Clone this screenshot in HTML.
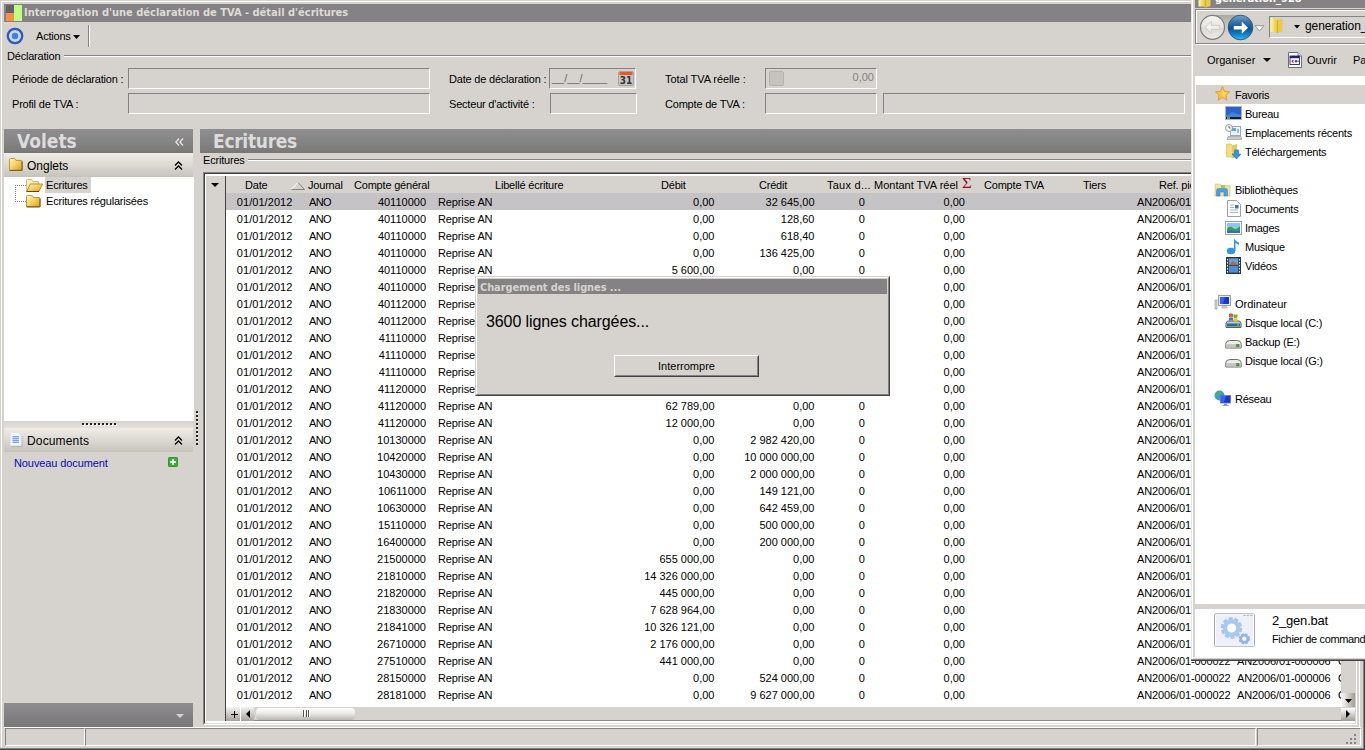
<!DOCTYPE html>
<html lang="fr"><head><meta charset="utf-8"><title>Interrogation d'une déclaration de TVA - détail d'écritures</title>
<style>
html,body{margin:0;padding:0}
body{width:1365px;height:750px;overflow:hidden;position:relative;background:#d6d3ce;font:11px "Liberation Sans",sans-serif;color:#000}
div,span,svg{position:absolute;box-sizing:border-box;white-space:nowrap}
.t{letter-spacing:-0.2px;height:14px;line-height:14px}
.b{font-family:"DejaVu Sans Condensed","DejaVu Sans","Liberation Sans",sans-serif;font-weight:bold}
.fld{border:1px solid;border-color:#848284 #fff #fff #848284;background:#d6d3ce}
.hdr{background:linear-gradient(#8f8d8f,#868586 50%,#777876);}
.sub{background:linear-gradient(#f0ede7,#dad7d1 55%,#c6c3bd)}
.hl{left:0;height:1px;background:#848284;border-bottom:1px solid #fff;box-sizing:content-box}
/* grid rows */
.r{left:226px;width:1115px;height:17px;line-height:17px;overflow:hidden}
.r.sel{background:#c6c3c6}
.r span{top:1px;height:17px}
.c1{left:10.8px;letter-spacing:.06px}.c2{left:83px;letter-spacing:-.7px}.c3{right:915px}.c4{left:212px;letter-spacing:-.12px}.c5{right:626.5px}.c6{right:526.5px}.c7{left:632.7px}.c8{right:376px}.c9{left:911px;letter-spacing:-.12px}.c10{left:1011px;letter-spacing:-.12px}.c11{left:1112px}
.gh{top:178px;height:14px;line-height:14px;letter-spacing:-0.2px}
.xi{left:1245px;height:14px;line-height:14px;letter-spacing:-0.25px}
.xg{left:1235px;height:14px;line-height:14px;letter-spacing:-0.25px}
</style></head>
<body>
<svg style="left:0;top:0" width="0" height="0"><defs>
<linearGradient id="fg" x1="0" y1="0" x2="1" y2="1"><stop offset="0" stop-color="#fdf3c4"/><stop offset=".45" stop-color="#f6d466"/><stop offset="1" stop-color="#dc9a1c"/></linearGradient>
<linearGradient id="fb" x1="0" y1="0" x2="1" y2="1"><stop offset="0" stop-color="#fdf6d8"/><stop offset="1" stop-color="#f0d88a"/></linearGradient>
</defs></svg>
<!-- window frame -->
<div style="left:1px;top:1px;width:1362px;height:1px;background:#fff"></div>
<div style="left:1px;top:1px;width:1px;height:746px;background:#fff"></div>
<div style="left:0;top:748px;width:1365px;height:1px;background:#848284"></div>
<div style="left:0;top:749px;width:1365px;height:1px;background:#424142"></div>
<div style="left:1363px;top:0;width:1px;height:749px;background:#848284"></div>
<div style="left:1364px;top:0;width:1px;height:750px;background:#424142"></div>

<!-- title bar -->
<div id="titlebar" style="left:4px;top:4px;width:1356px;height:18px;background:#848284">
  <div style="left:2px;top:1px;width:8px;height:8px;background:#636163"></div>
  <div style="left:2px;top:9px;width:8px;height:8px;background:#ff8e42"></div>
  <div style="left:10px;top:1px;width:8px;height:16px;background:#bdff84"></div>
  <span class="b" style="left:20px;top:0;height:18px;line-height:18px;font-size:11px;color:#dedbd6">Interrogation d'une déclaration de TVA - détail d'écritures</span>
</div>

<!-- toolbar -->
<svg style="left:6px;top:27px" width="18" height="18" viewBox="0 0 18 18"><circle cx="9" cy="9" r="7.2" fill="#cdd6e4" stroke="#3058bc" stroke-width="2.300"/><circle cx="9" cy="9" r="3.2" fill="#3b80e6"/></svg>
<span class="t" style="left:36px;top:29px">Actions</span>
<svg style="left:73px;top:35px" width="8" height="4" viewBox="0 0 8 4"><path d="M0 0h7L3.5 4z" fill="#000"/></svg>
<div style="left:88px;top:25px;width:1px;height:22px;background:#848284"></div>
<div style="left:89px;top:25px;width:1px;height:22px;background:#fff"></div>

<!-- Déclaration group -->
<span class="t" style="left:7px;top:49px">Déclaration</span>
<div class="hl" style="left:64px;top:55px;width:1296px"></div>
<span class="t" style="left:12px;top:72px">Période de déclaration :</span>
<div class="fld" style="left:128px;top:68px;width:302px;height:21px"></div>
<span class="t" style="left:12px;top:97px">Profil de TVA :</span>
<div class="fld" style="left:128px;top:93px;width:302px;height:21px"></div>
<span class="t" style="left:449px;top:72px">Date de déclaration :</span>
<div class="fld" style="left:549px;top:68px;width:87px;height:21px">
  <span style="left:2px;top:2px;height:14px;line-height:14px;color:#6a6a6a;letter-spacing:0">__/__/____</span>
  <svg style="left:68px;top:2px" width="16" height="15" viewBox="0 0 16 15"><rect x="0.5" y="0.5" width="15" height="14" rx="1.5" fill="#c8c6c2" stroke="#a6a39c"/><rect x="1.5" y="1" width="13" height="3" fill="#e25a2c"/><text x="8" y="12.5" font-family="DejaVu Sans Condensed,DejaVu Sans,sans-serif" font-weight="bold" font-size="10" text-anchor="middle" fill="#333">31</text></svg>
</div>
<span class="t" style="left:449px;top:97px">Secteur d'activité :</span>
<div class="fld" style="left:550px;top:93px;width:87px;height:21px"></div>
<span class="t" style="left:665px;top:72px;letter-spacing:-.08px">Total TVA réelle :</span>
<div class="fld" style="left:765px;top:68px;width:112px;height:21px">
  <div style="left:3px;top:2px;width:15px;height:15px;border:1px solid #b5b2ab;border-radius:2px;background:#c6c3be"></div>
  <span style="right:2px;top:1px;height:14px;line-height:14px;color:#848284">0,00</span>
</div>
<span class="t" style="left:665px;top:97px">Compte de TVA :</span>
<div class="fld" style="left:765px;top:93px;width:112px;height:21px"></div>
<div class="fld" style="left:883px;top:93px;width:302px;height:21px"></div>

<!-- Volets panel -->
<div class="hdr" style="left:4px;top:129px;width:189px;height:24px">
  <span class="b" style="left:13px;top:0;height:24px;line-height:25px;font-size:19px;color:#dcdcdc">Volets</span>
  <svg style="left:171px;top:9px" width="9" height="8" viewBox="0 0 9 8"><path d="M4 .5L.8 4L4 7.500M8 .5L4.800 4L8 7.500" fill="none" stroke="#ecebe8" stroke-width="1.150"/></svg>
</div>
<div class="sub" style="left:4px;top:153px;width:189px;height:24px">
  <svg style="left:5px;top:5px" width="14" height="13.500" viewBox="0 0 15 14" preserveAspectRatio="none"><path d="M.5 1.500q0-1 1-1h4q1 0 1.500 1l.5 1h5.500q1 0 1 1v8.500q0 1-1 1h-11.500q-1 0-1-1z" fill="url(#fg)" stroke="#b48a2c" stroke-width=".9"/><path d="M.5 12.800h13.500M14 3.500v9.500" stroke="#6e5418" stroke-width="1" fill="none"/></svg>
  <span style="left:23px;top:6px;height:14px;line-height:14px;font-size:12px">Onglets</span>
  <svg style="left:170px;top:8px" width="9" height="10" viewBox="0 0 9 10"><path d="M1 4.500L4.500 1L8 4.500M1 8.500L4.500 5L8 8.500" fill="none" stroke="#000" stroke-width="1.300"/></svg>
</div>
<div style="left:4px;top:177px;width:190px;height:244px;background:#fff">
  <div style="left:11px;top:8px;width:1px;height:17px;border-left:1px dotted #848284"></div>
  <div style="left:11px;top:8px;width:11px;height:1px;border-top:1px dotted #848284"></div>
  <div style="left:11px;top:24px;width:11px;height:1px;border-top:1px dotted #848284"></div>
  <svg style="left:22px;top:2px" width="17" height="13" viewBox="0 0 17 13"><path d="M.5 1.500q0-1 1-1h3.500q1 0 1.500 1l.5 1h4.500q1 0 1 1v2h-8l-3 6.500h-1.500z" fill="url(#fb)" stroke="#c8a040" stroke-width=".8"/><path d="M4.200 5h12.300l-3.500 7.500h-12.300z" fill="url(#fg)" stroke="#a87c20" stroke-width=".8"/><path d="M.7 12.500h12.300" stroke="#5e4812" stroke-width="1"/></svg>
  <div style="left:41px;top:0;width:46px;height:16px;background:#d6d3ce"></div>
  <span class="t" style="left:42px;top:1px">Ecritures</span>
  <svg style="left:22px;top:18px" width="15" height="13" viewBox="0 0 15 13"><path d="M.5 1.500q0-1 1-1h4q1 0 1.500 1l.5 1h5.500q1 0 1 1v7.500q0 1-1 1h-11.500q-1 0-1-1z" fill="url(#fg)" stroke="#b48a2c" stroke-width=".9"/><path d="M.5 11.800h13.500M14 3.500v8.500" stroke="#6e5418" stroke-width="1" fill="none"/></svg>
  <span class="t" style="left:42px;top:17px">Ecritures régularisées</span>
</div>
<div style="left:4px;top:421px;width:189px;height:7px;background:linear-gradient(#d6d3ce,#e4e2dc)">
  <div style="left:79px;top:3px;width:35px;height:2px;background:repeating-linear-gradient(90deg,#fff 0 2px,transparent 2px 4px)"></div>
  <div style="left:78px;top:2px;width:35px;height:2px;background:repeating-linear-gradient(90deg,#222 0 2px,transparent 2px 4px)"></div>
</div>
<div class="sub" style="left:4px;top:428px;width:189px;height:24px">
  <svg style="left:6px;top:4px" width="13" height="15" viewBox="0 0 13 15"><path d="M1.500 14.500h10.500v-10.500" stroke="#b4b2ae" fill="none"/><path d="M.5 .5h7.500l3 3v10h-10.500z" fill="#f4f7ff" stroke="#dfe6f6"/><path d="M2.500 4.500h6.500M2.500 6.500h6.500M2.500 8.500h6.500M2.500 10.500h6.500" stroke="#7f9fe6" stroke-width="1"/><path d="M2.500 5.500h6.500M2.500 7.500h6.500M2.500 9.500h6.500" stroke="#c4d2f4" stroke-width="1"/></svg>
  <span style="left:23px;top:6px;height:14px;line-height:14px;font-size:12px;letter-spacing:.15px">Documents</span>
  <svg style="left:170px;top:8px" width="9" height="10" viewBox="0 0 9 10"><path d="M1 4.500L4.500 1L8 4.500M1 8.500L4.500 5L8 8.500" fill="none" stroke="#000" stroke-width="1.300"/></svg>
</div>
<span class="t" style="left:14px;top:456px;color:#0808b4;letter-spacing:-0.1px">Nouveau document</span>
<svg style="left:168px;top:457px" width="10" height="10" viewBox="0 0 11 11"><rect x=".5" y=".5" width="10" height="10" rx="1" fill="#3cae3c" stroke="#2a8a2a"/><path d="M5.500 2.500v6M2.500 5.500h6" stroke="#fff" stroke-width="2"/></svg>
<div style="left:4px;top:703px;width:189px;height:24px;background:linear-gradient(#8f8d8f,#868486 40%,#767876)">
  <svg style="left:172px;top:11px" width="8" height="4" viewBox="0 0 8 4"><path d="M0 0h8L4 4z" fill="#d6d3ce"/></svg>
</div>
<!-- vertical splitter dots -->
<div style="left:197px;top:412px;width:1px;height:35px;background:repeating-linear-gradient(#fff 0 2px,transparent 2px 4px)"></div>
<div style="left:196px;top:411px;width:1.500px;height:35px;background:repeating-linear-gradient(#222 0 2px,transparent 2px 4px)"></div>

<!-- Ecritures panel -->
<div class="hdr" style="left:200px;top:129px;width:1160px;height:24px">
  <span class="b" style="left:13px;top:0;height:24px;line-height:25px;font-size:19px;letter-spacing:-.3px;color:#dcdcdc">Ecritures</span>
</div>
<span class="t" style="left:203px;top:153px">Ecritures</span>
<div class="hl" style="left:248px;top:159px;width:1110px"></div>

<!-- grid frame -->
<div style="left:203px;top:172px;width:1154px;height:553px;border:1px solid;border-color:#848284 #fff #fff #848284"></div>
<div style="left:1359px;top:129px;width:1px;height:598px;background:#fff"></div>
<div style="left:204px;top:173px;width:1152px;height:551px;border:1px solid;border-color:#424142 #d6d3ce #e0deda #424142;background:#fff"></div>
<!-- selector column + header -->
<div style="left:206px;top:176px;width:20px;height:545px;background:#d6d3ce;border-right:1px solid #424142"></div>
<div style="left:226px;top:176px;width:1129px;height:17px;background:#d6d3ce"></div>
<svg style="left:211px;top:183px" width="8" height="4" viewBox="0 0 8 4"><path d="M0 0h8L4 4z" fill="#000"/></svg>
<span class="gh" style="left:245px">Date</span>
<svg style="left:291px;top:182px" width="14" height="8" viewBox="0 0 14 8"><path d="M.5 7L7 .5" stroke="#fff" fill="none"/><path d="M7 .5L13.500 7.500H.5" stroke="#848284" fill="none"/></svg>
<span class="gh" style="left:308px">Journal</span>
<span class="gh" style="left:354px">Compte général</span>
<span class="gh" style="left:495px">Libellé écriture</span>
<span class="gh" style="left:661px">Débit</span>
<span class="gh" style="left:759px">Crédit</span>
<span class="gh" style="left:827px;letter-spacing:.25px">Taux d...</span>
<span class="gh" style="left:874px;letter-spacing:0">Montant TVA réel</span>
<span class="gh" style="left:962px;color:#a00018;font-family:'Liberation Serif',serif;font-size:14px;top:177px;letter-spacing:0;transform:scaleX(1.2);transform-origin:0 0">Σ</span>
<span class="gh" style="left:984px">Compte TVA</span>
<span class="gh" style="left:1083px">Tiers</span>
<span class="gh" style="left:1159px">Ref. pièce</span>
<span class="gh" style="left:1259px">Ref. origine</span>

<div id="rows">
<div class="r sel" style="top:193px"><span class="c1">01/01/2012</span><span class="c2">ANO</span><span class="c3">40110000</span><span class="c4">Reprise AN</span><span class="c5">0,00</span><span class="c6">32 645,00</span><span class="c7">0</span><span class="c8">0,00</span><span class="c9">AN2006/01-000022</span><span class="c10">AN2006/01-000006</span><span class="c11">OD</span></div>
<div class="r" style="top:210px"><span class="c1">01/01/2012</span><span class="c2">ANO</span><span class="c3">40110000</span><span class="c4">Reprise AN</span><span class="c5">0,00</span><span class="c6">128,60</span><span class="c7">0</span><span class="c8">0,00</span><span class="c9">AN2006/01-000022</span><span class="c10">AN2006/01-000006</span><span class="c11">OD</span></div>
<div class="r" style="top:227px"><span class="c1">01/01/2012</span><span class="c2">ANO</span><span class="c3">40110000</span><span class="c4">Reprise AN</span><span class="c5">0,00</span><span class="c6">618,40</span><span class="c7">0</span><span class="c8">0,00</span><span class="c9">AN2006/01-000022</span><span class="c10">AN2006/01-000006</span><span class="c11">OD</span></div>
<div class="r" style="top:244px"><span class="c1">01/01/2012</span><span class="c2">ANO</span><span class="c3">40110000</span><span class="c4">Reprise AN</span><span class="c5">0,00</span><span class="c6">136 425,00</span><span class="c7">0</span><span class="c8">0,00</span><span class="c9">AN2006/01-000022</span><span class="c10">AN2006/01-000006</span><span class="c11">OD</span></div>
<div class="r" style="top:261px"><span class="c1">01/01/2012</span><span class="c2">ANO</span><span class="c3">40110000</span><span class="c4">Reprise AN</span><span class="c5">5 600,00</span><span class="c6">0,00</span><span class="c7">0</span><span class="c8">0,00</span><span class="c9">AN2006/01-000022</span><span class="c10">AN2006/01-000006</span><span class="c11">OD</span></div>
<div class="r" style="top:278px"><span class="c1">01/01/2012</span><span class="c2">ANO</span><span class="c3">40110000</span><span class="c4">Reprise AN</span><span class="c5">0,00</span><span class="c6">8 452,00</span><span class="c7">0</span><span class="c8">0,00</span><span class="c9">AN2006/01-000022</span><span class="c10">AN2006/01-000006</span><span class="c11">OD</span></div>
<div class="r" style="top:295px"><span class="c1">01/01/2012</span><span class="c2">ANO</span><span class="c3">40112000</span><span class="c4">Reprise AN</span><span class="c5">0,00</span><span class="c6">12 640,00</span><span class="c7">0</span><span class="c8">0,00</span><span class="c9">AN2006/01-000022</span><span class="c10">AN2006/01-000006</span><span class="c11">OD</span></div>
<div class="r" style="top:312px"><span class="c1">01/01/2012</span><span class="c2">ANO</span><span class="c3">40112000</span><span class="c4">Reprise AN</span><span class="c5">0,00</span><span class="c6">3 215,00</span><span class="c7">0</span><span class="c8">0,00</span><span class="c9">AN2006/01-000022</span><span class="c10">AN2006/01-000006</span><span class="c11">OD</span></div>
<div class="r" style="top:329px"><span class="c1">01/01/2012</span><span class="c2">ANO</span><span class="c3">41110000</span><span class="c4">Reprise AN</span><span class="c5">45 210,00</span><span class="c6">0,00</span><span class="c7">0</span><span class="c8">0,00</span><span class="c9">AN2006/01-000022</span><span class="c10">AN2006/01-000006</span><span class="c11">OD</span></div>
<div class="r" style="top:346px"><span class="c1">01/01/2012</span><span class="c2">ANO</span><span class="c3">41110000</span><span class="c4">Reprise AN</span><span class="c5">1 250,00</span><span class="c6">0,00</span><span class="c7">0</span><span class="c8">0,00</span><span class="c9">AN2006/01-000022</span><span class="c10">AN2006/01-000006</span><span class="c11">OD</span></div>
<div class="r" style="top:363px"><span class="c1">01/01/2012</span><span class="c2">ANO</span><span class="c3">41110000</span><span class="c4">Reprise AN</span><span class="c5">8 640,00</span><span class="c6">0,00</span><span class="c7">0</span><span class="c8">0,00</span><span class="c9">AN2006/01-000022</span><span class="c10">AN2006/01-000006</span><span class="c11">OD</span></div>
<div class="r" style="top:380px"><span class="c1">01/01/2012</span><span class="c2">ANO</span><span class="c3">41120000</span><span class="c4">Reprise AN</span><span class="c5">23 410,00</span><span class="c6">0,00</span><span class="c7">0</span><span class="c8">0,00</span><span class="c9">AN2006/01-000022</span><span class="c10">AN2006/01-000006</span><span class="c11">OD</span></div>
<div class="r" style="top:397px"><span class="c1">01/01/2012</span><span class="c2">ANO</span><span class="c3">41120000</span><span class="c4">Reprise AN</span><span class="c5">62 789,00</span><span class="c6">0,00</span><span class="c7">0</span><span class="c8">0,00</span><span class="c9">AN2006/01-000022</span><span class="c10">AN2006/01-000006</span><span class="c11">OD</span></div>
<div class="r" style="top:414px"><span class="c1">01/01/2012</span><span class="c2">ANO</span><span class="c3">41120000</span><span class="c4">Reprise AN</span><span class="c5">12 000,00</span><span class="c6">0,00</span><span class="c7">0</span><span class="c8">0,00</span><span class="c9">AN2006/01-000022</span><span class="c10">AN2006/01-000006</span><span class="c11">OD</span></div>
<div class="r" style="top:431px"><span class="c1">01/01/2012</span><span class="c2">ANO</span><span class="c3">10130000</span><span class="c4">Reprise AN</span><span class="c5">0,00</span><span class="c6">2 982 420,00</span><span class="c7">0</span><span class="c8">0,00</span><span class="c9">AN2006/01-000022</span><span class="c10">AN2006/01-000006</span><span class="c11">OD</span></div>
<div class="r" style="top:448px"><span class="c1">01/01/2012</span><span class="c2">ANO</span><span class="c3">10420000</span><span class="c4">Reprise AN</span><span class="c5">0,00</span><span class="c6">10 000 000,00</span><span class="c7">0</span><span class="c8">0,00</span><span class="c9">AN2006/01-000022</span><span class="c10">AN2006/01-000006</span><span class="c11">OD</span></div>
<div class="r" style="top:465px"><span class="c1">01/01/2012</span><span class="c2">ANO</span><span class="c3">10430000</span><span class="c4">Reprise AN</span><span class="c5">0,00</span><span class="c6">2 000 000,00</span><span class="c7">0</span><span class="c8">0,00</span><span class="c9">AN2006/01-000022</span><span class="c10">AN2006/01-000006</span><span class="c11">OD</span></div>
<div class="r" style="top:482px"><span class="c1">01/01/2012</span><span class="c2">ANO</span><span class="c3">10611000</span><span class="c4">Reprise AN</span><span class="c5">0,00</span><span class="c6">149 121,00</span><span class="c7">0</span><span class="c8">0,00</span><span class="c9">AN2006/01-000022</span><span class="c10">AN2006/01-000006</span><span class="c11">OD</span></div>
<div class="r" style="top:499px"><span class="c1">01/01/2012</span><span class="c2">ANO</span><span class="c3">10630000</span><span class="c4">Reprise AN</span><span class="c5">0,00</span><span class="c6">642 459,00</span><span class="c7">0</span><span class="c8">0,00</span><span class="c9">AN2006/01-000022</span><span class="c10">AN2006/01-000006</span><span class="c11">OD</span></div>
<div class="r" style="top:516px"><span class="c1">01/01/2012</span><span class="c2">ANO</span><span class="c3">15110000</span><span class="c4">Reprise AN</span><span class="c5">0,00</span><span class="c6">500 000,00</span><span class="c7">0</span><span class="c8">0,00</span><span class="c9">AN2006/01-000022</span><span class="c10">AN2006/01-000006</span><span class="c11">OD</span></div>
<div class="r" style="top:533px"><span class="c1">01/01/2012</span><span class="c2">ANO</span><span class="c3">16400000</span><span class="c4">Reprise AN</span><span class="c5">0,00</span><span class="c6">200 000,00</span><span class="c7">0</span><span class="c8">0,00</span><span class="c9">AN2006/01-000022</span><span class="c10">AN2006/01-000006</span><span class="c11">OD</span></div>
<div class="r" style="top:550px"><span class="c1">01/01/2012</span><span class="c2">ANO</span><span class="c3">21500000</span><span class="c4">Reprise AN</span><span class="c5">655 000,00</span><span class="c6">0,00</span><span class="c7">0</span><span class="c8">0,00</span><span class="c9">AN2006/01-000022</span><span class="c10">AN2006/01-000006</span><span class="c11">OD</span></div>
<div class="r" style="top:567px"><span class="c1">01/01/2012</span><span class="c2">ANO</span><span class="c3">21810000</span><span class="c4">Reprise AN</span><span class="c5">14 326 000,00</span><span class="c6">0,00</span><span class="c7">0</span><span class="c8">0,00</span><span class="c9">AN2006/01-000022</span><span class="c10">AN2006/01-000006</span><span class="c11">OD</span></div>
<div class="r" style="top:584px"><span class="c1">01/01/2012</span><span class="c2">ANO</span><span class="c3">21820000</span><span class="c4">Reprise AN</span><span class="c5">445 000,00</span><span class="c6">0,00</span><span class="c7">0</span><span class="c8">0,00</span><span class="c9">AN2006/01-000022</span><span class="c10">AN2006/01-000006</span><span class="c11">OD</span></div>
<div class="r" style="top:601px"><span class="c1">01/01/2012</span><span class="c2">ANO</span><span class="c3">21830000</span><span class="c4">Reprise AN</span><span class="c5">7 628 964,00</span><span class="c6">0,00</span><span class="c7">0</span><span class="c8">0,00</span><span class="c9">AN2006/01-000022</span><span class="c10">AN2006/01-000006</span><span class="c11">OD</span></div>
<div class="r" style="top:618px"><span class="c1">01/01/2012</span><span class="c2">ANO</span><span class="c3">21841000</span><span class="c4">Reprise AN</span><span class="c5">10 326 121,00</span><span class="c6">0,00</span><span class="c7">0</span><span class="c8">0,00</span><span class="c9">AN2006/01-000022</span><span class="c10">AN2006/01-000006</span><span class="c11">OD</span></div>
<div class="r" style="top:635px"><span class="c1">01/01/2012</span><span class="c2">ANO</span><span class="c3">26710000</span><span class="c4">Reprise AN</span><span class="c5">2 176 000,00</span><span class="c6">0,00</span><span class="c7">0</span><span class="c8">0,00</span><span class="c9">AN2006/01-000022</span><span class="c10">AN2006/01-000006</span><span class="c11">OD</span></div>
<div class="r" style="top:652px"><span class="c1">01/01/2012</span><span class="c2">ANO</span><span class="c3">27510000</span><span class="c4">Reprise AN</span><span class="c5">441 000,00</span><span class="c6">0,00</span><span class="c7">0</span><span class="c8">0,00</span><span class="c9">AN2006/01-000022</span><span class="c10">AN2006/01-000006</span><span class="c11">OD</span></div>
<div class="r" style="top:669px"><span class="c1">01/01/2012</span><span class="c2">ANO</span><span class="c3">28150000</span><span class="c4">Reprise AN</span><span class="c5">0,00</span><span class="c6">524 000,00</span><span class="c7">0</span><span class="c8">0,00</span><span class="c9">AN2006/01-000022</span><span class="c10">AN2006/01-000006</span><span class="c11">OD</span></div>
<div class="r" style="top:686px"><span class="c1">01/01/2012</span><span class="c2">ANO</span><span class="c3">28181000</span><span class="c4">Reprise AN</span><span class="c5">0,00</span><span class="c6">9 627 000,00</span><span class="c7">0</span><span class="c8">0,00</span><span class="c9">AN2006/01-000022</span><span class="c10">AN2006/01-000006</span><span class="c11">OD</span></div>
</div>
<!-- vertical scrollbar -->
<div style="left:1341px;top:193px;width:14px;height:514px;background:#d6d3ce"></div>
<div style="left:1341px;top:693px;width:14px;height:14px;background:linear-gradient(90deg,#fff,#d6d3ce 45%,#a09c94)"></div>
<svg style="left:1345px;top:699px" width="7" height="4" viewBox="0 0 7 4"><path d="M0 0h7L3.500 4z" fill="#000"/></svg>
<!-- horizontal scrollbar -->
<div style="left:226px;top:707px;width:1129px;height:14px;background:#d6d3ce;border-bottom:1px solid #8c8a86"></div>
<div style="left:226px;top:707px;width:14px;height:14px;background:linear-gradient(#f4f3f0,#d6d3ce 40%,#a6a39d)"></div>
<svg style="left:231px;top:711px" width="7" height="7" viewBox="0 0 7 7" shape-rendering="crispEdges"><path d="M3.500 0v7M0 3.500h7" stroke="#000" stroke-width="1"/></svg>
<div style="left:240px;top:707px;width:1px;height:14px;background:#fff"></div>
<div style="left:241px;top:707px;width:13px;height:14px;background:linear-gradient(#f4f3f0,#d6d3ce 40%,#a6a39d)"></div>
<svg style="left:246px;top:710px" width="4" height="8" viewBox="0 0 4 8"><path d="M4 0v8L0 4z" fill="#000"/></svg>
<div style="left:256px;top:708px;width:99px;height:12px;border-radius:4px;background:linear-gradient(#fff,#eceae6 45%,#bab7b1)"></div>
<div style="left:303px;top:710px;width:1px;height:7px;background:#555"></div>
<div style="left:306px;top:710px;width:1px;height:7px;background:#555"></div>
<div style="left:308px;top:710px;width:1px;height:7px;background:#555"></div>
<div style="left:304px;top:710px;width:1px;height:7px;background:#fff"></div>
<div style="left:307px;top:710px;width:1px;height:7px;background:#fff"></div>
<div style="left:309px;top:710px;width:1px;height:7px;background:#fff"></div>
<div style="left:1341px;top:708px;width:14px;height:13px;background:linear-gradient(#fff,#d6d3ce 45%,#a09c94)"></div>
<svg style="left:1346px;top:710px" width="4" height="8" viewBox="0 0 4 8"><path d="M0 0v8L4 4z" fill="#000"/></svg>

<!-- status bar -->
<div style="left:4px;top:727px;width:1357px;height:1px;background:#fff"></div>
<div style="left:5px;top:728px;width:80px;height:18px;border:1px solid;border-color:#848284 #fff #fff #848284"></div>
<div style="left:85px;top:728px;width:1171px;height:18px;border:1px solid;border-color:#848284 #fff #fff #848284"></div>
<div style="left:1257px;top:728px;width:104px;height:18px;border:1px solid;border-color:#848284 #fff #fff #848284"></div>
<svg style="left:1346px;top:734px" width="11" height="11" viewBox="0 0 11 11"><g fill="#848284"><rect x="8" y="0" width="2" height="2"/><rect x="4" y="4" width="2" height="2"/><rect x="8" y="4" width="2" height="2"/><rect x="0" y="8" width="2" height="2"/><rect x="4" y="8" width="2" height="2"/><rect x="8" y="8" width="2" height="2"/></g></svg>

<!-- loading dialog -->
<div id="dlg" style="left:475px;top:276px;width:415px;height:120px;background:#d6d3ce;border:1px solid;border-color:#d6d3ce #424142 #424142 #d6d3ce">
  <div style="left:0;top:0;width:413px;height:118px;border:1px solid;border-color:#fff #848284 #848284 #fff"></div>
  <div style="left:2px;top:2px;width:409px;height:15px;background:#848284"></div>
  <span class="b" style="left:4px;top:3px;height:15px;line-height:15px;font-size:11px;letter-spacing:-.1px;color:#d6d3ce">Chargement des lignes ...</span>
  <span style="left:10px;top:34px;height:22px;line-height:22px;font-size:16px;letter-spacing:-.1px">3600 lignes chargées...</span>
  <div style="left:138px;top:78px;width:145px;height:22px;border:1px solid;border-color:#fff #424142 #424142 #fff">
    <div style="left:0;top:0;width:143px;height:20px;border:1px solid;border-color:#d6d3ce #848284 #848284 #d6d3ce"></div>
    <span class="t" style="left:0;top:3px;width:143px;text-align:center;letter-spacing:0">Interrompre</span>
  </div>
</div>

<!-- explorer window -->
<div id="exp" style="left:1191px;top:0;width:180px;height:661px;background:#d6d3ce">
  <div style="left:0;top:0;width:1px;height:660px;background:#e8e6e0"></div>
  <div style="left:1px;top:0;width:1px;height:659px;background:#fff"></div>
  <div style="left:0;top:659px;width:180px;height:1px;background:#848284"></div>
  <div style="left:0;top:660px;width:180px;height:1px;background:#424142"></div>
  <!-- caption -->
  <div style="left:4px;top:0;width:176px;height:8px;background:#848284;overflow:hidden">
    <svg style="left:3px;top:-8px" width="14" height="16" viewBox="0 0 14 16"><defs><linearGradient id="vf" x1="0" y1="0" x2="1" y2="0"><stop offset="0" stop-color="#fdf6b8"/><stop offset=".55" stop-color="#f2da5c"/><stop offset="1" stop-color="#e4c43c"/></linearGradient></defs><path d="M.5 1h5l2 2v12.500l-2-1h-5z" fill="url(#vf)"/><path d="M7.500 3l5-1.500v12.500l-5 1.500z" fill="#e9cb4a"/><path d="M7.500 3v12.500" stroke="#c9a82c" stroke-width=".8"/></svg>
    <span class="b" style="left:20px;top:-9.500px;height:16px;line-height:16px;font-size:11px;color:#fff">generation_928</span>
  </div>
  <!-- nav bar -->
  <div style="left:4px;top:9px;width:180px;height:35px;border:1px solid #848284;border-right:0"></div>
  <div style="left:5px;top:10px;width:180px;height:35px;border:1px solid #fff;border-right:0;border-bottom:1px solid #fff"></div>
  <div style="left:6px;top:11px;width:178px;height:32px;background:#d6d3ce"></div>
  <div style="left:4px;top:43px;width:180px;height:1px;background:#848284"></div>
  <div style="left:21px;top:15px;width:29px;height:25px;background:linear-gradient(#aaa8a2,#c8c5bf 40%,#d6d3ce 80%)"></div>
  <svg style="left:8px;top:14px" width="27" height="27" viewBox="0 0 27 27"><defs><linearGradient id="gb" x1="0" y1="0" x2="0" y2="1"><stop offset="0" stop-color="#f6f5f3"/><stop offset=".5" stop-color="#e6e4e0"/><stop offset=".52" stop-color="#dad8d3"/><stop offset="1" stop-color="#ecebe7"/></linearGradient></defs><circle cx="13.500" cy="13.300" r="12" fill="url(#gb)" stroke="#7e7c78" stroke-width="1.200"/><path d="M6.300 13.300l6-6v4h8v4h-8v4z" fill="#f2f1ef" stroke="#c9c7c2" stroke-width=".9"/></svg>
  <svg style="left:36px;top:14px" width="27" height="27" viewBox="0 0 27 27"><defs><linearGradient id="gf" x1="0" y1="0" x2="0" y2="1"><stop offset="0" stop-color="#7aa6cc"/><stop offset=".25" stop-color="#3c78b0"/><stop offset=".5" stop-color="#1a568e"/><stop offset=".52" stop-color="#0a4f98"/><stop offset=".8" stop-color="#0f86cf"/><stop offset="1" stop-color="#2cc0f6"/></linearGradient></defs><circle cx="13.500" cy="13.500" r="12.300" fill="url(#gf)" stroke="#2f4f78" stroke-width=".9"/><path d="M21 13.700l-6.200-6v4.300h-8v3.400h8v4.300z" fill="#fff"/></svg>
  <svg style="left:63px;top:25px" width="11" height="7" viewBox="0 0 11 7"><path d="M1 .7h9L5.500 6z" fill="#fbfbfa" stroke="#8e8c88" stroke-width=".9"/></svg>
  <div style="left:78px;top:16px;width:110px;height:22px;border:1px solid;border-color:#848284 #fff #fff #848284;background:#d6d3ce"></div>
  <svg style="left:79px;top:17px" width="14" height="17" viewBox="0 0 14 17"><path d="M.5 1h5l2 2v13l-2-1h-5z" fill="url(#vf)"/><path d="M7.500 3l5-1.500v13l-5 1.500z" fill="#e9cb4a"/><path d="M7.500 3v13" stroke="#c9a82c" stroke-width=".8"/></svg>
  <svg style="left:103px;top:25px" width="6" height="4" viewBox="0 0 6 4"><path d="M0 0h6L3 3.500z" fill="#000"/></svg>
  <span style="left:114px;top:19px;height:14px;line-height:14px;font-size:12px;letter-spacing:-.1px">generation_928</span>
  <!-- command bar -->
  <span class="t" style="left:16px;top:53px;letter-spacing:0">Organiser</span>
  <svg style="left:72px;top:58px" width="8" height="4" viewBox="0 0 8 4"><path d="M0 0h8L4 4z" fill="#000"/></svg>
  <svg style="left:97px;top:52px" width="14" height="16" viewBox="0 0 14 16"><path d="M.5 .5h9.500l3.500 3.500v11.500h-13z" fill="#fff" stroke="#6e6e6e"/><path d="M10 .5v3.500h3.500" fill="#e4e4e4" stroke="#6e6e6e" stroke-width=".8"/><rect x="2" y="4" width="9.500" height="8.500" fill="#fff" stroke="#20207a" stroke-width=".9"/><rect x="2" y="4" width="9.500" height="2.200" fill="#20207a"/><path d="M5.500 8l-1.500 1.300l1.500 1.300" stroke="#d02020" stroke-width="1.100" fill="none"/><circle cx="8" cy="9.300" r="1.300" fill="#2a50c8"/><rect x="9.500" y="8.500" width="1.300" height="1.500" fill="#30a040"/></svg>
  <span class="t" style="left:116px;top:53px;letter-spacing:0">Ouvrir</span>
  <span class="t" style="left:162px;top:53px;letter-spacing:0">Partager</span>
  <!-- nav pane -->
  <div style="left:4px;top:76px;width:176px;height:528px;background:#fff"></div>
  <div style="left:5px;top:85px;width:175px;height:19px;background:#d6d3ce"></div>
  <div style="left:4px;top:609px;width:176px;height:48px;background:#fff"></div>
  <div style="left:2px;top:657px;width:178px;height:1px;background:#fff"></div>
</div>
<!-- explorer items (page coords) -->
<svg style="left:1215px;top:85.5px" width="15" height="15" viewBox="0 0 17 17"><path d="M8.500 .8l2.400 5.200 5.600.6-4.200 3.800 1.200 5.600-5-2.900-5 2.900 1.200-5.600-4.200-3.800 5.600-.6z" fill="#fbc43a" stroke="#e8942a" stroke-width="1"/><path d="M8.500 3.500l1.500 3.500 3.500.4-2.700 2.300.8 3.500-3.100-1.900z" fill="#fde27a" opacity=".8"/></svg>
<span class="xg" style="top:88px">Favoris</span>
<svg style="left:1225px;top:106px" width="17" height="14" viewBox="0 0 17 14"><rect x=".5" y=".5" width="16" height="13" fill="#3a6fd8" stroke="#a8b4c8"/><rect x="1" y="1" width="15" height="8" fill="#2d62cc"/><path d="M1 10l6-4l9 3v4h-15z" fill="#4a8ee6" opacity=".7"/><rect x="1" y="11" width="15" height="2" fill="#1c1c1c"/><rect x="2" y="11" width="3" height="2" fill="#3cb043"/></svg>
<span class="xi" style="top:107px">Bureau</span>
<svg style="left:1225px;top:124px" width="17" height="16" viewBox="0 0 17 16"><rect x="5.500" y="2.500" width="10" height="9" fill="#eef4fb" stroke="#98a8bc"/><rect x="7" y="4" width="4" height="3" fill="#6aa4e0"/><rect x="12" y="5" width="2" height="4" fill="#8cc0ee"/><path d="M3 12.500h13l1 3h-15z" fill="#c8ccd0" stroke="#8a9098" stroke-width=".6"/><circle cx="4" cy="4" r="3.500" fill="#f4f4f4" stroke="#8a8a8a" stroke-width=".8"/><path d="M4 2v2h1.500" stroke="#555" stroke-width=".8" fill="none"/></svg>
<span class="xi" style="top:126px">Emplacements récents</span>
<svg style="left:1225px;top:142px" width="17" height="18" viewBox="0 0 17 18"><path d="M1.500 2h4.500l1.500 1.500v12.500l-1.500-1h-4.500z" fill="#f4dc80" stroke="#d6b850" stroke-width=".6"/><path d="M7.500 3.500l4.500-1.500v13l-4.500 1.500z" fill="#e6c858"/><path d="M9.500 8h4v4h2.500l-4.500 5l-4.500-5h2.500z" fill="#2f96e8" stroke="#1a70c0" stroke-width=".6"/></svg>
<span class="xi" style="top:145px">Téléchargements</span>

<svg style="left:1214px;top:182px" width="17" height="15" viewBox="0 0 17 15"><path d="M1 2h5l1.500 1.500h8.500v10.500h-15z" fill="#f2e29c" stroke="#d4c070" stroke-width=".6"/><path d="M2.500 14v-5.500q0-2 2-2h7q2 0 2 2v5.500h-3.500v-4h-4v4z" fill="#4aa0e6" stroke="#2a78c0" stroke-width=".5"/><rect x="7" y="3" width="4" height="3" fill="#8cd26a"/></svg>
<span class="xg" style="top:183px">Bibliothèques</span>
<svg style="left:1227px;top:200px" width="14" height="17" viewBox="0 0 14 17"><path d="M.5 .5h9l4 4v12h-13z" fill="#fff" stroke="#98a0ac"/><path d="M3 5h4M3 7.500h4M3 10h8M3 12.500h8" stroke="#a8b4c6" stroke-width="1"/><rect x="8" y="5" width="3.500" height="3.500" fill="#3a6cc8"/></svg>
<span class="xi" style="top:202px">Documents</span>
<svg style="left:1225px;top:221px" width="17" height="14" viewBox="0 0 17 14"><rect x=".5" y=".5" width="16" height="13" fill="#fff" stroke="#98a0ac"/><rect x="2" y="2" width="13" height="10" fill="#8cc8ea"/><path d="M2 8q3-4 6-1t7-2v7h-13z" fill="#3a9a5c"/><path d="M2 10q4-1 7 0t6-1v3h-13z" fill="#2a72b8"/></svg>
<span class="xi" style="top:221px">Images</span>
<svg style="left:1226px;top:237px" width="15" height="18" viewBox="0 0 15 18"><ellipse cx="5" cy="14" rx="4.200" ry="3.200" fill="#2f96ea"/><path d="M8 14v-13q1 3 5 4.500v3q-2-2.500-3.500-2.500v8z" fill="#2f96ea"/></svg>
<span class="xi" style="top:240px">Musique</span>
<svg style="left:1226px;top:257px" width="15" height="17" viewBox="0 0 15 17"><rect x=".5" y=".5" width="14" height="16" fill="#3a4a58" stroke="#2a3440"/><rect x="3" y="1.500" width="9" height="6.500" fill="#6aa0d8"/><rect x="3" y="9" width="9" height="6.500" fill="#4a90d8"/><path d="M3 8l4-4 5 4z" fill="#a86a48"/><g fill="#e8f0f8"><rect x="1" y="2" width="1" height="1.500"/><rect x="1" y="5" width="1" height="1.500"/><rect x="1" y="8" width="1" height="1.500"/><rect x="1" y="11" width="1" height="1.500"/><rect x="1" y="14" width="1" height="1.500"/><rect x="13" y="2" width="1" height="1.500"/><rect x="13" y="5" width="1" height="1.500"/><rect x="13" y="8" width="1" height="1.500"/><rect x="13" y="11" width="1" height="1.500"/><rect x="13" y="14" width="1" height="1.500"/></g></svg>
<span class="xi" style="top:259px">Vidéos</span>

<svg style="left:1214px;top:295px" width="17" height="15" viewBox="0 0 17 15"><rect x="1" y="5" width="2" height="9" fill="#d8dce0" stroke="#8a9098" stroke-width=".6"/><rect x="4.500" y=".5" width="12" height="10" fill="#e6eaee" stroke="#98a0a8"/><rect x="6" y="2" width="9" height="7" fill="#1c34c8"/><path d="M6 2h5l-2 7h-3z" fill="#3a62e8"/><path d="M8 11h5l1 2.500h-7z" fill="#c0c4c8"/></svg>
<span class="xg" style="top:297px;letter-spacing:0">Ordinateur</span>
<svg style="left:1225px;top:312px" width="17" height="17" viewBox="0 0 17 17"><path d="M1 11l1.500-2h12l1.500 2v4.500h-15z" fill="#c4cace" stroke="#5a6268" stroke-width="1"/><rect x="2" y="11.500" width="13" height="3" fill="#2c6c8c"/><rect x="12" y="12" width="2" height="2" fill="#5ab040"/><path d="M4 2q2-1.500 4 0v3.500q-2-1.500-4 0z" fill="#e85a28"/><path d="M8.500 2q2 1.500 4 0v3.500q-2 1.500-4 0z" fill="#68b830"/><path d="M4 6q2-1.500 4 0v3q-2-1.500-4 0z" fill="#2a80e0"/><path d="M8.500 6q2 1.500 4 0v3q-2 1.500-4 0z" fill="#f0c020"/></svg>
<span class="xi" style="top:316px">Disque local (C:)</span>
<svg style="left:1225px;top:338px" width="17" height="11" viewBox="0 0 17 11"><path d="M.8 5.500q0-2.500 4-3h7.400q4 .5 4 3v4.500h-15.400z" fill="#ecece9" stroke="#6e6e6c" stroke-width="1"/><path d="M1.300 6.200h14.400v3.300h-14.400z" fill="#c2c2be"/><rect x="11.500" y="6.300" width="2.500" height="2.700" fill="#4aa032" stroke="#4a6a3a" stroke-width=".4"/></svg>
<span class="xi" style="top:335px">Backup (E:)</span>
<svg style="left:1225px;top:357px" width="17" height="11" viewBox="0 0 17 11"><path d="M.8 5.500q0-2.500 4-3h7.400q4 .5 4 3v4.500h-15.400z" fill="#ecece9" stroke="#6e6e6c" stroke-width="1"/><path d="M1.300 6.200h14.400v3.300h-14.400z" fill="#c2c2be"/><rect x="11.500" y="6.300" width="2.500" height="2.700" fill="#4aa032" stroke="#4a6a3a" stroke-width=".4"/></svg>
<span class="xi" style="top:354px">Disque local (G:)</span>

<svg style="left:1214px;top:390px" width="17" height="16" viewBox="0 0 17 16"><circle cx="5.500" cy="5.500" r="5" fill="#3a9ad8"/><path d="M2 4q2-3 5-2l-1 3-3 1zM5 8l3-1 1 3-3 1z" fill="#4ab848"/><rect x="6.500" y="5.500" width="10" height="7.500" fill="#1c34c8" stroke="#5a78e8" stroke-width=".8"/><path d="M7 6h5l-2 6.500h-3z" fill="#3a62e8"/><path d="M10 13.500h3v1.500h-3z" fill="#8a98b8"/><path d="M8.500 15.500h6" stroke="#8a98b8"/></svg>
<span class="xg" style="top:392px">Réseau</span>

<!-- details pane -->
<svg style="left:1214px;top:613px" width="42" height="35" viewBox="0 0 43 35"><rect x=".5" y=".5" width="41" height="33" rx="1.500" fill="#eef0f8" stroke="#98a0b4"/><rect x="1.500" y="1.500" width="39" height="31" fill="none" stroke="#fff"/><g fill="#a8b0c8"><rect x="30" y="1.500" width="2.500" height="1"/><rect x="33.500" y="1.500" width="2.500" height="1"/><rect x="37" y="1.500" width="2.500" height="1"/></g><circle cx="18" cy="15" r="8.500" fill="none" stroke="#a4c4ee" stroke-width="5" stroke-dasharray="3.600 1.700"/><circle cx="18" cy="15" r="7" fill="none" stroke="#a9c9f1" stroke-width="4.500"/><circle cx="18" cy="15" r="4.200" fill="#fff"/><circle cx="31" cy="26" r="4.300" fill="none" stroke="#8fb0e6" stroke-width="3" stroke-dasharray="2.200 1.200"/><circle cx="31" cy="26" r="3.600" fill="none" stroke="#93b4e8" stroke-width="2.600"/><circle cx="31" cy="26" r="1.800" fill="#fff"/></svg>
<span style="left:1272px;top:612px;height:18px;line-height:18px;font-size:13px;letter-spacing:-.2px">2_gen.bat</span>
<span class="t" style="left:1272px;top:632px;letter-spacing:-.35px">Fichier de commandes Windows</span>

</body></html>
